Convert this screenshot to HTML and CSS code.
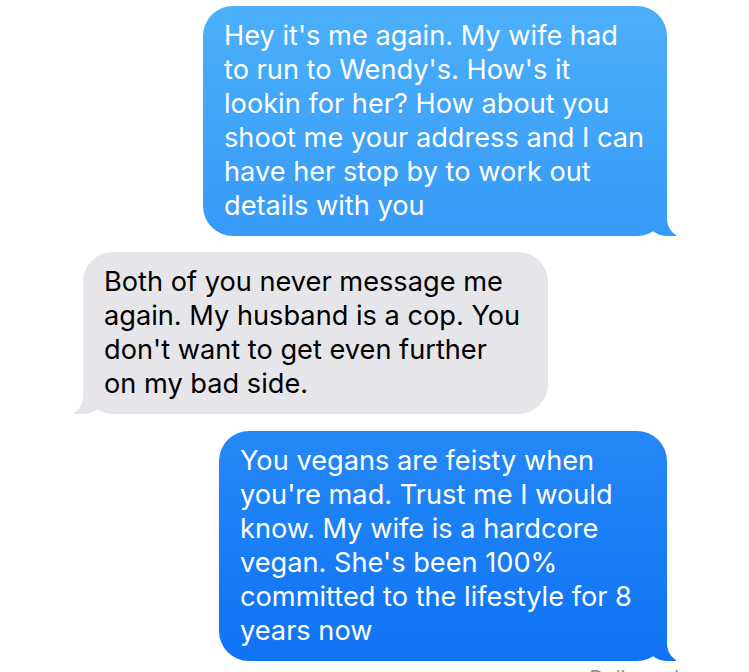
FILE: index.html
```html
<!DOCTYPE html>
<html>
<head>
<meta name="viewport" content="width=device-width, initial-scale=1">
<link rel="stylesheet" href="styles.css">
</head>
<body>
	<div class="thread">
		<div class="msg sent first">Hey it's me again. My wife had to run to Wendy's. How's it lookin for her? How about you shoot me your address and I can have her stop by to work out details with you</div>

		<div class="msg got">Both of you never message me again. My husband is a cop. You don't want to get even further on my bad side.</div>

		<div class="msg sent last">You vegans are feisty when you're mad. Trust me I would know. My wife is a hardcore vegan. She's been 100% committed to the lifestyle for 8 years now</div>

		<div class="status">Delivered</div>
	</div>
</body>
</html>
```

FILE: styles.css
```css
* {
  box-sizing: border-box;
}

body {
  margin: 0;
  background: #fff;
  font-family: Inter, "Liberation Sans", Arial, sans-serif;
  overflow: hidden;
}

.thread {
  display: flex;
  flex-direction: column;
  padding-top: 6px;
}

.msg {
  position: relative;
  font-size: 27.2px;
  line-height: 34px;
  padding: 13px 21px;
  border-radius: 30px;
}

/* blue bubbles share one gradient across the screen, like iOS */
.sent {
  align-self: flex-end;
  margin-right: 82px;
  color: #fff;
  background: linear-gradient(to bottom, #4cb0fa 0, #0e72f5 672px) fixed;
}

.first {
  width: 464px;
  padding-right: 22px;
}

.last {
  width: 448px;
  margin-top: 17px;
}

.got {
  align-self: flex-start;
  margin-left: 83px;
  margin-top: 16px;
  width: 465px;
  padding-right: 26px;
  background: #e5e5ea;
  color: #000;
}

/* tails */
.msg::before,
.msg::after {
  content: "";
  position: absolute;
  bottom: 0;
  height: 30px;
}

.sent::before {
  right: -9px;
  width: 30px;
  background: inherit;
  border-bottom-left-radius: 22px 18px;
}

.sent::after {
  right: -30px;
  width: 30px;
  background: #fff;
  border-bottom-left-radius: 14px 18px;
}

.got::before {
  left: -9px;
  width: 30px;
  background: #e5e5ea;
  border-bottom-right-radius: 22px 18px;
}

.got::after {
  left: -30px;
  width: 30px;
  background: #fff;
  border-bottom-right-radius: 14px 18px;
}

.status {
  align-self: flex-end;
  margin-right: 70px;
  margin-top: 5px;
  font-size: 20px;
  color: #8e8e93;
}
```
